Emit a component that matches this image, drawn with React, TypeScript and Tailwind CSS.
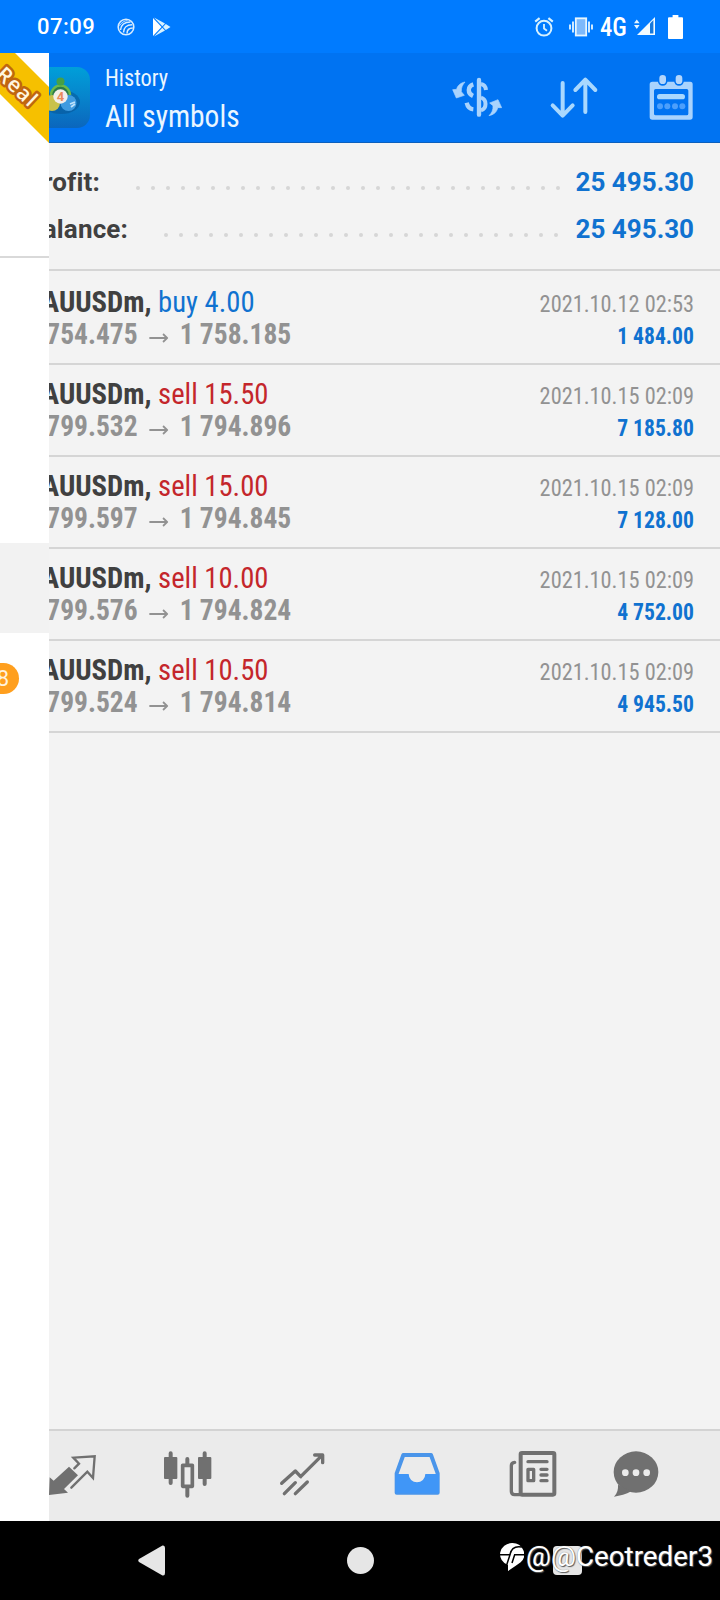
import type { ReactNode } from 'react'

type Deal = {
    side: 'buy' | 'sell'
    volume: string
    open: string
    close: string
    time: string
    profit: string
}

const deals: Deal[] = [
    { side: 'buy', volume: '4.00', open: '1 754.475', close: '1 758.185', time: '2021.10.12 02:53', profit: '1 484.00' },
    { side: 'sell', volume: '15.50', open: '1 799.532', close: '1 794.896', time: '2021.10.15 02:09', profit: '7 185.80' },
    { side: 'sell', volume: '15.00', open: '1 799.597', close: '1 794.845', time: '2021.10.15 02:09', profit: '7 128.00' },
    { side: 'sell', volume: '10.00', open: '1 799.576', close: '1 794.824', time: '2021.10.15 02:09', profit: '4 752.00' },
    { side: 'sell', volume: '10.50', open: '1 799.524', close: '1 794.814', time: '2021.10.15 02:09', profit: '4 945.50' },
]

const StatusBar = () => (
    <div className="flex h-[53px] items-center bg-[#007bff] pl-[37px] pr-[37px] text-white">
        <span className="w-[58px] text-[22px] font-medium leading-[54px] tracking-[0.500px]">07:09</span>
        <svg className="ml-[22px]" width="18" height="18" viewBox="0 0 18 18" fill="none" stroke="#d8ecff">
            <circle cx="9" cy="9" r="7.8" strokeWidth="1.6" />
            <path d="M3.500 12C4 7 7.500 4 13.500 4M6.500 14.500C6.500 10 9.500 6.800 15 6.800M10 15.500C10 12 12 10 15.800 10" strokeWidth="1.500" />
            <path d="M2.600 7.600C4.500 4.600 7 3 10.500 2.400" strokeWidth="0.800" />
        </svg>
        <svg className="ml-[17px]" width="19" height="20" viewBox="0 0 19 20">
            <path d="M1 1V19L9.5 10Z" fill="#fff" />
            <path d="M2 .6 10.3 9.2 13 6.6Z M2 19.4 10.3 10.8 13 13.4Z M13.8 7 11 10l2.8 3 4.7-3Z" fill="#d8f2ff" />
        </svg>
        <svg className="ml-auto" width="20" height="20" viewBox="0 0 20 20" fill="none" stroke="#d6f1ff">
            <circle cx="10" cy="11.2" r="7.4" strokeWidth="2" />
            <path d="M10 7v4.6l3 2.2" strokeWidth="1.8" />
            <path d="M1.2 4.6 5.6 1.2M18.8 4.6 14.4 1.2" strokeWidth="2.2" />
        </svg>
        <svg className="ml-[15px]" width="24" height="20" viewBox="0 0 24 20">
            <rect x="6.8" y="1.3" width="10.4" height="17.2" fill="#7db9fb" stroke="#e6f6ff" strokeWidth="1.8" />
            <path d="M4 4.5v11M1 7.5v5M20 4.5v11M23 7.5v5" stroke="#e6f6ff" strokeWidth="1.8" />
        </svg>
        <span className="ml-[7px] w-[27px] origin-left scale-x-[0.95] font-['Roboto_Condensed',Roboto,sans-serif] text-[26px] font-medium leading-[54px]">4G</span>
        <svg className="ml-[7px]" width="21" height="19" viewBox="0 0 21 19">
            <path d="M2.8 2.4 5.6 6.2H0ZM2.8 12 5.600 8H0Z" fill="#e6f6ff" />
            <path d="M21 0V18H3Z" fill="#f2fbff" />
            <path d="M16 6.4 19.4 3v13.4H16Z" fill="#1678dc" />
        </svg>
        <svg className="ml-[13px]" width="15" height="24" viewBox="0 0 15 24" fill="#fff">
            <path d="M4.6 0h5.8v2.2H14q1 0 1 1V23q0 1-1 1H1q-1 0-1-1V3.200q0-1 1-1h3.600z" />
        </svg>
    </div>
)

const AppLogo = () => (
    <svg width="60" height="61" viewBox="0 0 60 61">
        <defs>
            <linearGradient id="tile" x1="0" y1="0" x2="0" y2="1">
                <stop offset="0" stopColor="#009fd9" />
                <stop offset="0.5" stopColor="#0784cc" />
                <stop offset="1" stopColor="#0b66bd" />
            </linearGradient>
        </defs>
        <rect width="60" height="61" rx="13" fill="url(#tile)" />
        <ellipse cx="31" cy="35" rx="19" ry="12" fill="#07508f" opacity="0.5" />
        <circle cx="22" cy="36" r="8" fill="#c9c24a" />
        <circle cx="38.500" cy="36" r="8" fill="#3f9be0" />
        <path d="M40 37l5-2M41 40l4-3" stroke="#bfe3fb" strokeWidth="1.800" />
        <path d="M21 28a9.500 9.500 0 0 1 19 0" fill="#2a7a4a" stroke="#6cb84a" strokeWidth="2.400" />
        <circle cx="30.500" cy="14.500" r="4" fill="#46a046" />
        <circle cx="30.500" cy="29.500" r="7.200" fill="#f3efea" />
        <text x="30.500" y="34" textAnchor="middle" fontFamily="Roboto" fontSize="13" fontWeight="700" fill="#ea8a5c">4</text>
    </svg>
)

const Header = () => (
    <div className="flex h-[90px] items-center border-b border-[#0b5fbd] bg-[#0073f2] pl-[30px] pr-6 text-white">
        <AppLogo />
        <div className="ml-[15px] flex h-full flex-col pt-[10px] font-['Roboto_Condensed',Roboto,sans-serif] text-[#eaf6ff]">
            <span className="origin-left scale-x-[0.93] text-[24px] leading-[30px]">History</span>
            <span className="mt-px origin-left scale-x-[0.92] whitespace-nowrap text-[32px] leading-[44px]">All symbols</span>
        </div>
        <svg className="ml-auto" width="50" height="50" viewBox="276 219 150 150" fill="none" stroke="#a9d3fd">
            <path d="M357 240V344" strokeWidth="13" strokeLinecap="round" />
            <path d="M340 253C322 259 322 280 339 288M320 308C323 321 330 327 340 328" strokeWidth="13" />
            <path d="M363 252C373 254 377 260 378 270M363 293C381 298 381 326 363 331" strokeWidth="12" />
            <path d="M315 246C301 249 292 257 290 268L278 269 289 294 313 286 304 275C303 263 308 254 315 246Z" fill="#a9d3fd" stroke="#a9d3fd" strokeWidth="2" strokeLinejoin="round" />
            <path d="M387 347C402 344 411 335 413 323L425 323 414 299 389 309 399 317C400 330 395 339 387 347Z" fill="#a9d3fd" stroke="#a9d3fd" strokeWidth="2" strokeLinejoin="round" />
        </svg>
        <svg className="ml-[47px]" width="50" height="50" viewBox="567 219 150 150" fill="none" stroke="#a9d8fe" strokeWidth="12" strokeLinecap="round" strokeLinejoin="round">
            <path d="M608 249V346M578 316 608 347 638 316" />
            <path d="M676 336V240M646 270 676 239 706 270" />
        </svg>
        <svg className="ml-[47px]" width="50" height="50" viewBox="858 219 150 150">
            <path fillRule="evenodd" d="M877 245H991Q998 245 998 253V351Q998 359 990 359H877Q869 359 869 351V253Q869 245 877 245ZM887 267Q882 267 882 272V341Q882 346 887 346H980Q985 346 985 341V272Q985 267 980 267Z" fill="#a9d3fd" />
            <path d="M908 236V243M957 236V243" stroke="#0073f2" strokeWidth="29" strokeLinecap="round" />
            <path d="M908 235V242M957 235V242" stroke="#b4d6fb" strokeWidth="20" strokeLinecap="round" />
            <path d="M899 290H967" stroke="#a9d8fe" strokeWidth="16" strokeLinecap="round" />
            <g fill="#4c9ffb">
                <circle cx="900" cy="319" r="9" />
                <circle cx="922" cy="319" r="9" />
                <circle cx="945" cy="319" r="9" />
                <circle cx="967" cy="319" r="9" />
            </g>
        </svg>
    </div>
)

const SummaryRow = ({ label, value, dots, gap }: { label: string; value: string; dots: number; gap: string }) => (
    <div className="flex h-[47px] items-center text-[26px] font-bold leading-[47px]">
        <span className="tracking-[0.150px] text-[#404040]">{label}</span>
        <div className="ml-auto flex gap-[11px] pt-[10px]">
            {Array.from({ length: dots }, (_, i) => (
                <i key={i} className="size-1 rounded-full bg-[#d6d6d6]" />
            ))}
        </div>
        <span className={`${gap} text-[#1072d0]`}>{value}</span>
    </div>
)

const DealRow = ({ deal }: { deal: Deal }) => (
    <div className="flex h-[92px] justify-between border-b-2 border-[#d5d5d5] px-[26px] pt-[13px] font-['Roboto_Condensed',Roboto,sans-serif] leading-8 first:h-[94px] first:pt-[15px]">
        <div className="flex origin-left scale-x-[0.955] flex-col whitespace-nowrap">
            <span className="text-[30px]">
                <b className="font-bold text-[#404040]">XAUUSDm,</b>{' '}
                <span className={deal.side === 'buy' ? 'text-[#1072d0]' : 'text-[#c4262b]'}>
                    {deal.side} {deal.volume}
                </span>
            </span>
            <span className="flex text-[28.8px] font-bold text-[#929292]">
                {deal.open}
                <svg className="mx-3 mt-[10px]" width="20" height="20" viewBox="0 0 20 20" fill="none" stroke="#929292" strokeWidth="1.900">
                    <path d="M0 10H18.500M14.500 6l4.300 4-4.300 4" />
                </svg>
                {deal.close}
            </span>
        </div>
        <div className="flex flex-col pt-[2px] text-right text-[24px]">
            <span className="origin-right scale-x-[0.93] text-[#929292]">{deal.time}</span>
            <span className="origin-right scale-x-[0.9] font-bold text-[#1072d0]">{deal.profit}</span>
        </div>
    </div>
)

const TabIcon = ({ className = '', children }: { className?: string; children: ReactNode }) => (
    <svg className={`shrink-0 overflow-visible ${className}`} width="48" height="48" viewBox="0 0 144 144" fill="none" stroke="#707070" strokeLinejoin="round" strokeLinecap="round">
        {children}
    </svg>
)

const TabBar = () => (
    <div className="flex h-[92px] gap-[67px] border-t-2 border-[#d3d3d3] bg-[#ebebeb] pl-12 pt-[19px]">
        <TabIcon>
            <path d="M3 135 60 128 48 117 90 76 63 50 17 92 5 82Z" fill="#707070" stroke="none" />
            <path d="M79 55 93 41 76 23 140 19 135 84 118 65 70 113" strokeWidth="7" strokeLinejoin="miter" />
        </TabIcon>
        <TabIcon>
            <path d="M23 10V99M73 27V137M125 10V102" strokeWidth="12" />
            <rect x="3" y="21" width="40" height="66" rx="3" fill="#707070" stroke="none" />
            <rect x="105" y="21" width="40" height="66" rx="3" fill="#707070" stroke="none" />
            <rect x="59" y="46" width="29" height="63" fill="#ebebeb" strokeWidth="11" />
        </TabIcon>
        <TabIcon className="ml-px">
            <path d="M8 100 49 63 65 80 129 16M107 15H131V38M16 131 49 98M49 131 85 96" strokeWidth="10" />
        </TabIcon>
        <TabIcon className="-ml-px">
            <path d="M31 15H114L134 70V128H11V70Z" stroke="#4a95ea" strokeWidth="12" />
            <path d="M8 72H47A25 25 0 0 0 97 72H138V130H8Z" fill="#4096f7" stroke="none" />
        </TabIcon>
        <TabIcon className="ml-px">
            <rect x="35" y="9" width="101" height="125" rx="4" strokeWidth="12" />
            <path d="M17 37Q7 38 7 47V124Q7 134 17 134H35" strokeWidth="10" />
            <path d="M57 35H114M96 58H114M96 75H114M96 92H114" strokeWidth="10" />
            <rect x="57" y="58" width="17" height="34" strokeWidth="10" />
        </TabIcon>
        <TabIcon className="-ml-[12px]">
            <g fill="#707070" stroke="none">
                <ellipse cx="72" cy="66" rx="67" ry="62" />
                <path d="M6 140Q20 126 18 104L58 124Q34 137 6 140Z" />
            </g>
            <g fill="#ebebeb" stroke="none">
                <circle cx="40" cy="68" r="10" />
                <circle cx="72" cy="68" r="10" />
                <circle cx="104" cy="68" r="10" />
            </g>
        </TabIcon>
    </div>
)

const SystemNav = () => (
    <div className="relative flex h-[79px] items-center bg-black pl-[138px]">
        <svg width="27" height="31" viewBox="0 0 27 31" fill="#e6e6e6">
            <path d="M1 14 24.500.5Q27 0 27 3V28Q27 31 24.500 30.500L1 17Q-.5 15.500 1 14Z" />
        </svg>
        <div className="ml-[182px] size-[27px] rounded-full bg-[#e6e6e6]" />
        <div className="ml-[179px] size-[29px] rounded-[4px] bg-[#e6e6e6]" />
        <div className="absolute left-[500px] top-[20px] flex items-center">
            <svg width="24" height="28" viewBox="0 0 72 84">
                <path d="M36 0A36 34 0 0 1 62 58Q46 70 24 84V66A36 34 0 0 1 36 0Z" fill="#fff" />
                <path d="M66 12Q36 6 30 34M0 35H30L20 66M72 35H44L36 60" fill="none" stroke="#000" strokeWidth="4.500" />
            </svg>
            <span className="ml-[2px] whitespace-nowrap text-[27.800px] leading-8 text-white [text-shadow:0_0_1px_#777,1px_1px_1px_#555]">@@Ceotreder3</span>
        </div>
    </div>
)

const Drawer = () => (
    <div className="absolute left-0 top-[53px] h-[1468px] w-[49px] overflow-hidden bg-white">
        <div className="h-[205px] border-b-2 border-[#d9d9d9]">
            <svg width="49" height="90" viewBox="0 0 49 90">
                <path d="M0 0H15L49 34V90L0 41Z" fill="#f6c000" />
                <text
                    transform="translate(-5 23) rotate(43)"
                    fontFamily="Open Sans"
                    fontSize="21"
                    fontWeight="600"
                    letterSpacing="1"
                    fill="#fff6e0"
                    stroke="#c0660f"
                    strokeWidth="5"
                    strokeLinejoin="round"
                    paintOrder="stroke"
                >
                    Real
                </text>
            </svg>
        </div>
        <div className="mt-[285px] h-[90px] bg-[#f2f2f2]" />
        <div className="-ml-5 mt-[30px] flex h-[31px] w-[39px] items-center justify-end rounded-full bg-[#ff9f1e] pr-[10px] text-[22px] text-[#fff3dc]">
            8
        </div>
    </div>
)

export default function App() {
    return (
        <div className="relative flex h-[1600px] w-[720px] flex-col overflow-hidden bg-[#f3f3f3] font-['Roboto',sans-serif]">
            <StatusBar />
            <Header />
            <div className="h-[128px] border-b-2 border-[#d5d5d5] px-[26px] pt-4">
                <SummaryRow label="Profit:" value="25 495.30" dots={29} gap="ml-4" />
                <SummaryRow label="Balance:" value="25 495.30" dots={27} gap="ml-[18px]" />
            </div>
            <div className="grow">
                {deals.map((deal, i) => (
                    <DealRow key={i} deal={deal} />
                ))}
            </div>
            <TabBar />
            <SystemNav />
            <Drawer />
        </div>
    )
}
